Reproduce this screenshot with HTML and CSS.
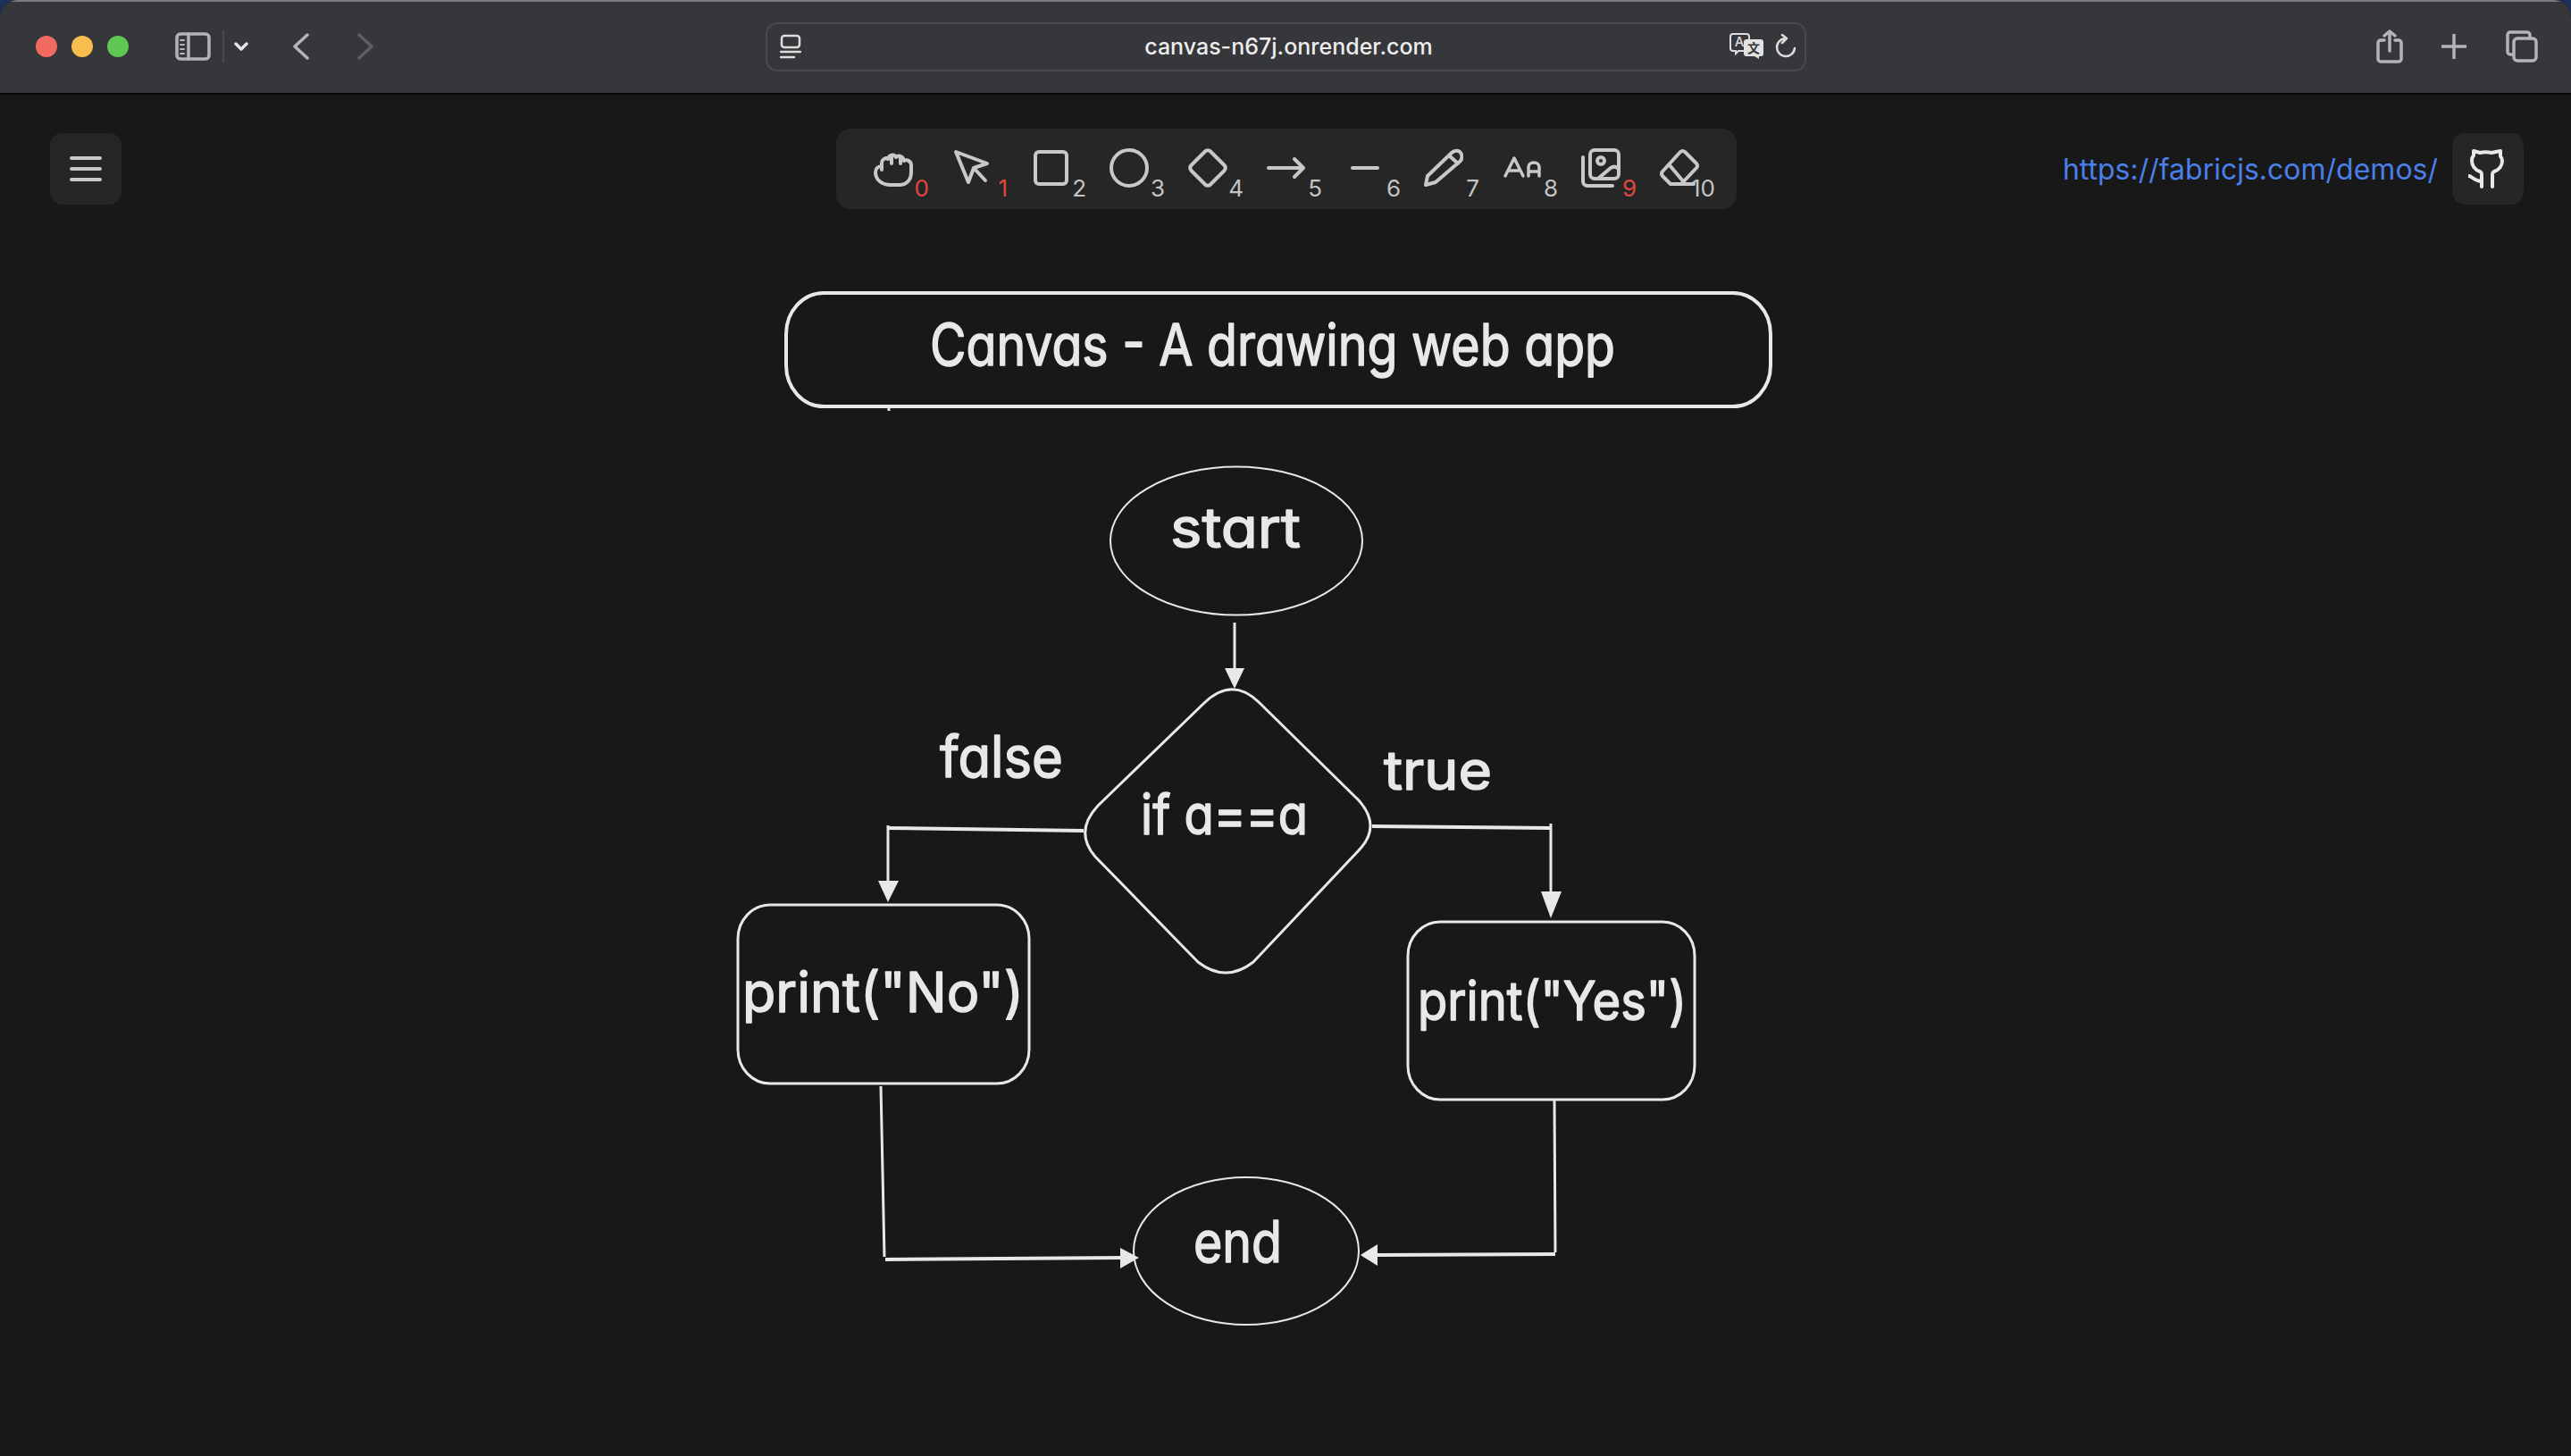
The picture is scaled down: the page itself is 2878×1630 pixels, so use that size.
FILE: index.html
```html
<!DOCTYPE html>
<html lang="en">
<head>
<meta charset="utf-8">
<title>Canvas</title>
<link rel="stylesheet" href="styles.css">
</head>
<body>
<div class="window">
  <header class="titlebar">
    <div class="tb-left">
      <div class="lights"><span class="light red"></span><span class="light yellow"></span><span class="light green"></span></div>
      <svg class="ic sidebar" width="40" height="32" viewBox="0 0 40 32"><rect x="2" y="2" width="36" height="28" rx="4"/><path d="M15 2V30"/><path class="thin" d="M6 9H10M6 14H10M6 19H10M6 24H10"/></svg>
      <span class="sep"></span>
      <svg class="ic chev" width="16" height="10" viewBox="0 0 16 10"><path d="M2 2L8 8L14 2"/></svg>
      <svg class="ic back" width="20" height="30" viewBox="0 0 20 30"><path d="M17 2L3 15L17 28"/></svg>
      <svg class="ic fwd" width="20" height="30" viewBox="0 0 20 30"><path d="M3 2L17 15L3 28"/></svg>
    </div>
    <div class="url">
      <svg class="ic urlicon" width="24" height="28" viewBox="0 0 24 28"><rect x="2" y="2" width="20" height="13" rx="3"/><path d="M1 20H23M1 26H16"/></svg>
      <span class="urltext">canvas-n67j.onrender.com</span>
      <svg class="translate" width="40" height="30" viewBox="0 0 40 30"><path class="bub" d="M4 1H19A3 3 0 0 1 22 4V17A3 3 0 0 1 19 20H10L7 23V20H4A3 3 0 0 1 1 17V4A3 3 0 0 1 4 1Z"/><text class="bub-a" x="11" y="15">A</text><path class="bubf" d="M19 7H35A3 3 0 0 1 38 10V23A3 3 0 0 1 35 26H33V29L28 26H19A3 3 0 0 1 16 23V10A3 3 0 0 1 19 7Z"/><text class="bub-b" x="27" y="22">文</text></svg>
      <svg class="ic reload" width="24" height="28" viewBox="0 0 24 28"><path d="M12 5A10 10 0 1 0 22 16M8 1L13 5L8 10"/></svg>
    </div>
    <div class="tb-right">
      <svg class="ic share" width="32" height="38" viewBox="0 0 32 38"><path d="M10 12H6A3 3 0 0 0 3 15V33A3 3 0 0 0 6 36H26A3 3 0 0 0 29 33V15A3 3 0 0 0 26 12H22M16 24V2M10 7L16 2L22 7"/></svg>
      <svg class="ic" width="28" height="28" viewBox="0 0 28 28"><path d="M14 1V27M1 14H27"/></svg>
      <svg class="ic" width="36" height="36" viewBox="0 0 36 36"><path d="M7 27H5A3 3 0 0 1 2 24V5A3 3 0 0 1 5 2H24A3 3 0 0 1 27 5V9"/><rect x="9" y="9" width="25" height="25" rx="4"/></svg>
    </div>
  </header>

  <main class="canvas">
    <svg class="board" width="2878" height="1524" viewBox="0 106 2878 1524">
      <rect class="s4" x="880" y="328" width="1102" height="127" rx="42" ry="46"/>
      <path class="s2" d="M995 456V460"/>
      <text class="hand fs64" x="1041" y="409" textLength="767" lengthAdjust="spacingAndGlyphs">Canvas - A drawing web app</text>

      <ellipse class="s1" cx="1384" cy="605.5" rx="141" ry="83"/>
      <text class="hand fs62" x="1310" y="613" textLength="146" lengthAdjust="spacingAndGlyphs">start</text>

      <path class="s2" d="M1382 697V750"/>
      <path class="fill" d="M1371 748H1393L1382 771Z"/>

      <path class="s3" d="M1348 787Q1379 757 1409 786L1521 896Q1547 925 1521 952L1403 1077Q1372 1101 1341 1077L1226 959Q1202 931 1229 902Z"/>
      <text class="hand fs62" x="1277" y="934" textLength="187" lengthAdjust="spacingAndGlyphs">if a==a</text>

      <text class="hand fs64" x="1052" y="870" textLength="138" lengthAdjust="spacingAndGlyphs">false</text>
      <text class="hand fs60" x="1549" y="884" textLength="121" lengthAdjust="spacingAndGlyphs">true</text>

      <path class="s4" d="M1213 930L994 927"/>
      <path class="s2" d="M994 924V990"/>
      <path class="fill" d="M983 986H1006L994 1010Z"/>

      <path class="s4" d="M1536 925L1736 927"/>
      <path class="s2" d="M1736 922V1000"/>
      <path class="fill" d="M1725 998H1748L1736 1028Z"/>

      <rect class="s3" x="826" y="1013" width="326" height="200" rx="36" ry="38"/>
      <text class="hand fs62" x="831" y="1133" textLength="315" lengthAdjust="spacingAndGlyphs">print("No")</text>

      <rect class="s3" x="1576" y="1032" width="321" height="199" rx="36" ry="38"/>
      <text class="hand fs60" x="1587" y="1142" textLength="301" lengthAdjust="spacingAndGlyphs">print("Yes")</text>

      <path class="s2" d="M986 1216L990 1407"/>
      <path class="s4" d="M991 1410L1257 1408"/>
      <path class="fill" d="M1254 1397L1275 1408L1254 1420Z"/>

      <ellipse class="s1" cx="1395" cy="1400.5" rx="126" ry="82.5"/>
      <text class="hand fs64" x="1336" y="1413" textLength="99" lengthAdjust="spacingAndGlyphs">end</text>

      <path class="s2" d="M1740 1232L1741 1402"/>
      <path class="s4" d="M1741 1404L1541 1405"/>
      <path class="fill" d="M1542 1393L1523 1405L1542 1417Z"/>
    </svg>

    <div class="toprow">
      <button class="sq">
        <svg class="ic wide" width="36" height="28" viewBox="0 0 36 28"><path d="M2 2H34M2 14H34M2 26H34"/></svg>
      </button>
      <nav class="tools">
        <div class="tool"><svg class="tic" viewBox="0 0 44 44"><path d="M9 24V17C9 12 14 10 16 12C17 7 23 6 25 10C28 7 33 9 34 14C38 12 42 15 42 19V27C42 36 36 41 29 41H19C9 41 2 35 2 27C2 23 5 20 9 20M20 9V17M30 10V17"/></svg><span class="num red-n">0</span></div>
        <div class="tool"><svg class="tic" viewBox="0 0 44 44"><path d="M4 4L39 17L24 22L18 38ZM24 22L37 36"/></svg><span class="num red-n">1</span></div>
        <div class="tool"><svg class="tic" viewBox="0 0 44 44"><rect x="5" y="4" width="35" height="36" rx="4"/></svg><span class="num">2</span></div>
        <div class="tool"><svg class="tic" viewBox="0 0 44 44"><circle cx="22" cy="22" r="20"/></svg><span class="num">3</span></div>
        <div class="tool"><svg class="tic" viewBox="0 0 44 44"><path d="M19 3.500A4.200 4.200 0 0 1 25 3.500L40.500 19A4.200 4.200 0 0 1 40.500 25L25 40.500A4.200 4.200 0 0 1 19 40.500L3.500 25A4.200 4.200 0 0 1 3.500 19Z"/></svg><span class="num">4</span></div>
        <div class="tool"><svg class="tic" viewBox="0 0 44 44"><path d="M2 22H41M31 12L41 22L31 32"/></svg><span class="num">5</span></div>
        <div class="tool"><svg class="tic" viewBox="0 0 44 44"><path d="M8 22H36"/></svg><span class="num">6</span></div>
        <div class="tool"><svg class="tic" viewBox="0 0 44 44"><path d="M2 41L4 31L31 5C34 2 39 2 41 5C43 8 43 11 41 14L13 38ZM28 8L38 17"/></svg><span class="num">7</span></div>
        <div class="tool"><svg class="tic aa" viewBox="0 0 44 44"><path d="M3 31L13 11L23 31M6 25H20M29 31V21A6 5 0 0 1 41 21V31M29 26H41"/></svg><span class="num">8</span></div>
        <div class="tool"><svg class="tic" viewBox="0 0 44 44"><rect x="10" y="2" width="32" height="32" rx="5"/><path d="M2 10V37A5 5 0 0 0 7 42H35M20 33L33 22C36 20 39 20 42 23"/><circle cx="22" cy="14" r="4"/></svg><span class="num red-n">9</span></div>
        <div class="tool"><svg class="tic" viewBox="0 0 44 44"><path d="M23 4A4 4 0 0 1 28 4L41 17A4 4 0 0 1 41 22L24 40H12L3 31A4 4 0 0 1 3 26ZM11 19L27 38M13 40H38"/></svg><span class="num">10</span></div>
      </nav>
      <div class="links">
        <a class="link">https://fabricjs.com/demos/</a>
        <button class="sq">
          <svg class="gh" width="44" height="44" viewBox="0 0 44 44"><path d="M15 42V31C15 27 15 26 13 25C7 23 4 18 4 13C4 10 5 8 6 7V2L13 4C17 3 22 3 26 4L36 2V8C37 9 38 11 38 13C38 18 35 23 29 25C27 26 27 27 27 31V42M1 30C5 31 7 36 15 36"/></svg>
        </button>
      </div>
    </div>
  </main>
</div>
</body>
</html>
```

FILE: styles.css
```css
* { box-sizing: border-box; }
html, body { margin: 0; padding: 0; height: 100%; background: #1c3058; }
body { overflow: hidden; }

.window {
  width: 2878px;
  height: 1630px;
  display: flex;
  flex-direction: column;
  border-radius: 20px 20px 0 0;
  overflow: hidden;
  background: #181818;
}

.titlebar {
  height: 106px;
  flex: none;
  display: flex;
  align-items: center;
  padding-bottom: 2px;
  background: #36373a;
  border-top: 2px solid #7b7c7e;
  border-bottom: 2px solid #050505;
}

.ic { fill: none; stroke: #b4b5b6; stroke-width: 3.500; stroke-linecap: round; stroke-linejoin: round; flex: none; }
.ic .thin { stroke-width: 2; }

.tb-left { width: 857px; flex: none; display: flex; align-items: center; padding-left: 40px; height: 100%; }
.lights { display: flex; gap: 16px; }
.light { width: 24px; height: 24px; border-radius: 50%; display: block; }
.red { background: #f16a5f; }
.yellow { background: #f7bd4f; }
.green { background: #60c654; }
.sidebar { margin-left: 52px; }
.sep { width: 2px; height: 36px; background: #48494c; margin-left: 13px; }
.chev { margin-left: 11px; stroke: #e4e4e4; }
.back { margin-left: 49px; }
.fwd { margin-left: 52px; stroke: #5f6062; }

.url {
  width: 1165px;
  height: 55px;
  flex: none;
  display: flex;
  align-items: center;
  padding: 0 9px 0 14px;
  border: 2px solid #4a4b4e;
  border-radius: 13px;
}
.urlicon { stroke: #dcdcdc; stroke-width: 2.500; }
.urltext {
  flex: 1;
  padding-left: 52px;
  text-align: center;
  font: 500 25px "Inter", "Liberation Sans", sans-serif;
  color: #ededed;
  white-space: nowrap;
}
.translate { flex: none; margin-right: 11px; }
.bub { fill: none; stroke: #dcdcdc; stroke-width: 2; }
.bubf { fill: #e2e2e2; }
.bub-a { font: 500 15px "Inter", "Liberation Sans", sans-serif; fill: #dcdcdc; text-anchor: middle; }
.bub-b { font: 700 14px "Noto Sans CJK SC", sans-serif; fill: #36373a; text-anchor: middle; }
.reload { stroke: #dcdcdc; stroke-width: 2.500; }

.tb-right { flex: 1; display: flex; align-items: center; justify-content: flex-end; gap: 44px; padding-right: 37px; }
.share { margin-right: -2px; }

.canvas { flex: 1; position: relative; background: #181818; }
.board { position: absolute; left: 0; top: 0; display: block; }
.s1, .s2, .s3, .s4 { fill: none; stroke: #e8e8e8; }
.s1 { stroke-width: 2; }
.s2 { stroke-width: 3; }
.s3 { stroke-width: 3; }
.s4 { stroke-width: 4; }
.fill { fill: #e8e8e8; }
.hand {
  font-family: "Inter", "Lato", sans-serif;
  font-feature-settings: "cv11" 1;
  font-weight: 400;
  fill: #e8e8e8;
  stroke: #e8e8e8;
  stroke-width: 1.500;
  stroke-linejoin: round;
}
.fs64 { font-size: 64px; }
.fs62 { font-size: 62px; }
.fs60 { font-size: 60px; }

.toprow {
  position: relative;
  display: flex;
  align-items: center;
  padding: 38px 53px 0 56px;
}
.sq {
  width: 80px;
  height: 80px;
  flex: none;
  display: flex;
  align-items: center;
  justify-content: center;
  padding: 0;
  border: 0;
  border-radius: 14px;
  background: #262626;
}
.wide { stroke: #c8c8c8; stroke-width: 4; }
.tools {
  display: flex;
  margin-left: 800px;
  padding: 0 20px;
  height: 90px;
  border-radius: 16px;
  background: #262626;
}
.tool { position: relative; width: 88px; display: flex; justify-content: center; padding-top: 22px; }
.tic { width: 44px; height: 44px; fill: none; stroke: #c8c8c8; stroke-width: 4; stroke-linecap: round; stroke-linejoin: round; }
.aa { stroke-width: 3.500; }
.num {
  position: absolute;
  right: 4px;
  bottom: 10px;
  font: 400 26px/26px "Inter", "Liberation Sans", sans-serif;
  color: #c4c4c4;
}
.num.red-n { color: #e0483f; }

.links { margin-left: auto; display: flex; align-items: center; gap: 16px; }
.link { font: 400 32px "Inter", "Liberation Sans", sans-serif; color: #4a7fe8; white-space: nowrap; }
.gh { fill: none; stroke: #e8e8e8; stroke-width: 4; stroke-linecap: round; stroke-linejoin: round; }
```
